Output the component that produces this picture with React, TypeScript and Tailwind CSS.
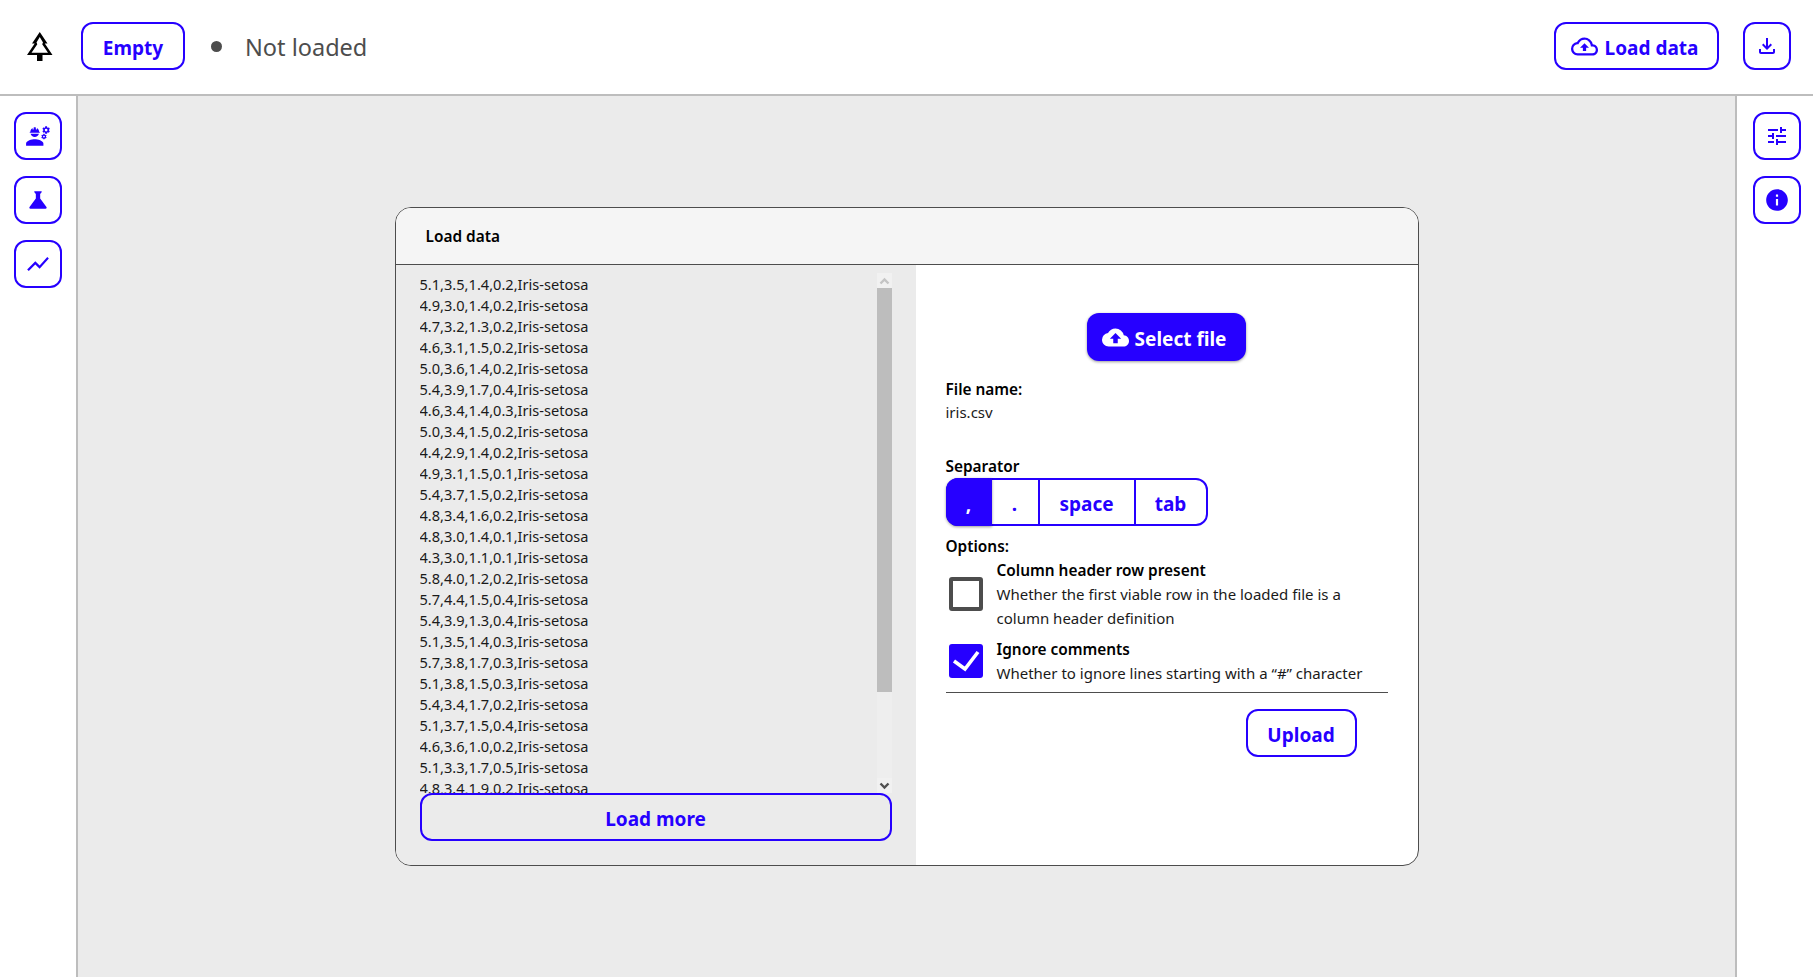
import React from 'react';
import { MdEngineering, MdScience, MdShowChart, MdOutlineCloudUpload, MdCloudUpload, MdOutlineFileDownload, MdTune, MdInfo } from 'react-icons/md';

const rows = [
  '5.1,3.5,1.4,0.2', '4.9,3.0,1.4,0.2', '4.7,3.2,1.3,0.2', '4.6,3.1,1.5,0.2', '5.0,3.6,1.4,0.2',
  '5.4,3.9,1.7,0.4', '4.6,3.4,1.4,0.3', '5.0,3.4,1.5,0.2', '4.4,2.9,1.4,0.2', '4.9,3.1,1.5,0.1',
  '5.4,3.7,1.5,0.2', '4.8,3.4,1.6,0.2', '4.8,3.0,1.4,0.1', '4.3,3.0,1.1,0.1', '5.8,4.0,1.2,0.2',
  '5.7,4.4,1.5,0.4', '5.4,3.9,1.3,0.4', '5.1,3.5,1.4,0.3', '5.7,3.8,1.7,0.3', '5.1,3.8,1.5,0.3',
  '5.4,3.4,1.7,0.2', '5.1,3.7,1.5,0.4', '4.6,3.6,1.0,0.2', '5.1,3.3,1.7,0.5',
];

const IconButton = ({ children }: { children: React.ReactNode }) => (
  <button className="flex h-12 w-12 items-center justify-center rounded-xl border-2 border-[#2600ff] text-[#2600ff]">
    {children}
  </button>
);

const OutlineButton = ({ className, children }: { className: string; children: React.ReactNode }) => (
  <button className={`flex h-12 items-center justify-center rounded-xl border-2 border-[#2600ff] pt-1 text-[19px] font-bold text-[#2600ff] ${className}`}>
    {children}
  </button>
);

const TreeLogo = () => (
  <svg width="26" height="29" viewBox="0 0 26 29" className="shrink-0">
    <rect x="10" y="22" width="5.5" height="7" fill="#000" />
    <path d="M12.75 0 L20.5 11.5 H17.8 L25.5 23 H0 L7.7 11.5 H5 Z" fill="#000" />
    <path d="M12.75 5 L16 10.6 L15.2 12.3 L21 20.7 H4.5 L10.3 12.3 L9.5 10.6 Z" fill="#fff" />
  </svg>
);

export default function App() {
  return (
    <div className="flex h-screen flex-col overflow-hidden bg-white font-['Noto_Sans',sans-serif] text-black">
      <header className="flex h-24 shrink-0 items-center border-b-2 border-[#bdbdbd] pb-0.5 pl-[27px] pr-[22px]">
        <TreeLogo />
        <OutlineButton className="ml-[28px] w-[104px]">Empty</OutlineButton>
        <div className="ml-[26px] h-[11px] w-[11px] rounded-full bg-[#4d4d4d]" />
        <span className="ml-[23px] pt-1 text-[23.5px] text-[#4d4d4d]">Not loaded</span>
        <div className="ml-auto flex items-center gap-6">
          <OutlineButton className="w-[165px] gap-[7px]">
            <MdOutlineCloudUpload className="-mt-1 -ml-1 text-[27px]" />
            Load data
          </OutlineButton>
          <IconButton><MdOutlineFileDownload className="text-[24px]" /></IconButton>
        </div>
      </header>

      <div className="flex min-h-0 flex-1">
        <aside className="flex w-[78px] shrink-0 flex-col gap-4 border-r-2 border-[#bdbdbd] pl-3.5 pt-4">
          <IconButton><MdEngineering className="text-[26px]" /></IconButton>
          <IconButton><MdScience className="text-[26px]" /></IconButton>
          <IconButton><MdShowChart className="text-[26px]" /></IconButton>
        </aside>

        <main className="flex flex-1 items-center justify-center bg-[#ebebeb]">
          <div className="flex h-[659px] w-[1024px] flex-col overflow-hidden rounded-2xl border border-[#4d4d4d] bg-white">
            <div className="flex h-[57px] shrink-0 items-center border-b border-[#4d4d4d] bg-[#f5f5f5] pl-[30px] pt-0.5 text-[15.4px] font-semibold">
              Load data
            </div>
            <div className="flex min-h-0 flex-1">
              <div className="flex w-[520px] shrink-0 flex-col bg-[#ebebeb] px-6 pb-6 pt-2">
                <div className="flex min-h-0 flex-1">
                  <div className="min-w-0 flex-1 overflow-hidden pt-px text-[14.6px] leading-[21px] text-[#1a1a1a]">
                    {rows.map((r, i) => (
                      <div key={i}>{r},Iris-setosa</div>
                    ))}
                    <div className="h-[19px] overflow-visible">4.8,3.4,1.9,0.2,Iris-setosa</div>
                  </div>
                  <div className="flex w-[15px] shrink-0 flex-col bg-[#f1f1f1]">
                    <div className="flex h-[15px] items-center justify-center">
                      <svg width="11" height="8" viewBox="0 0 11 8"><path d="M1.5 6.5 L5.5 2.5 L9.5 6.5" fill="none" stroke="#c4c4c4" strokeWidth="2.4" /></svg>
                    </div>
                    <div className="h-[404px] bg-[#bdbdbd]" />
                    <div className="flex-1 bg-[#eeeeee]" />
                    <div className="flex h-[15px] items-center justify-center">
                      <svg width="11" height="8" viewBox="0 0 11 8"><path d="M1.5 1.5 L5.5 5.5 L9.5 1.5" fill="none" stroke="#505050" strokeWidth="2.4" /></svg>
                    </div>
                  </div>
                </div>
                <OutlineButton className="w-full shrink-0">Load more</OutlineButton>
              </div>

              <div className="flex min-w-0 flex-1 flex-col pl-[30px] pr-[30px] pt-[48px]">
                <button className="ml-[141px] flex h-12 w-[159px] items-center justify-center gap-[6px] rounded-xl bg-[#2600ff] pt-1 text-[19px] font-bold text-white shadow-[0_1px_3px_rgba(0,0,0,0.4)]">
                  <MdCloudUpload className="-mt-1 -ml-1 text-[27px]" />
                  Select file
                </button>
                <div className="mt-[17px] text-[15.4px] font-semibold leading-[24px]">File name:</div>
                <div className="-mt-px text-[15px] leading-[22px] text-[#1a1a1a]">iris.csv</div>
                <div className="mt-[32px] text-[15.4px] font-semibold leading-[23px]">Separator</div>
                <div className="flex h-12 w-[262px] rounded-xl border-2 border-[#2600ff] text-[19px] font-bold text-[#2600ff]">
                  <div className="-my-0.5 -ml-0.5 flex w-[46px] items-center justify-center rounded-l-xl bg-[#2600ff] pt-1 text-white shadow-[0_1px_3px_rgba(0,0,0,0.4)]">,</div>
                  <div className="flex w-[48px] items-center justify-center border-r-2 border-[#2600ff] pt-1">.</div>
                  <div className="flex w-[96px] items-center justify-center border-r-2 border-[#2600ff] pt-1">space</div>
                  <div className="flex flex-1 items-center justify-center pt-1">tab</div>
                </div>
                <div className="mt-[9px] text-[15.4px] font-semibold leading-[23px]">Options:</div>
                <div className="flex gap-[14px] pl-[3px]">
                  <div className="mt-[19px] h-[34px] w-[34px] shrink-0 rounded-[3px] border-4 border-[#4d4d4d]" />
                  <div className="text-[15px] leading-[24px] text-[#1a1a1a]">
                    <div className="translate-y-px text-[15.4px] font-semibold text-black">Column header row present</div>
                    <div>Whether the first viable row in the loaded file is a column header definition</div>
                  </div>
                </div>
                <div className="mt-[7px] flex gap-[14px] pl-[3px]">
                  <div className="mt-[7px] h-[34px] w-[34px] shrink-0 rounded-[3px] bg-[#2600ff]">
                    <svg width="34" height="34" viewBox="0 0 34 34"><path d="M5 17 L16 25 L29 8" fill="none" stroke="#fff" strokeWidth="3.6" /></svg>
                  </div>
                  <div className="text-[15px] leading-[24px] text-[#1a1a1a]">
                    <div className="translate-y-px text-[15.4px] font-semibold text-black">Ignore comments</div>
                    <div>Whether to ignore lines starting with a “#” character</div>
                  </div>
                </div>
                <div className="mt-[7px] h-px w-[442px] bg-[#4d4d4d]" />
                <OutlineButton className="ml-[300px] mt-4 w-[111px]">Upload</OutlineButton>
              </div>
            </div>
          </div>
        </main>

        <aside className="flex w-[78px] shrink-0 flex-col gap-4 border-l-2 border-[#bdbdbd] pl-4 pt-4">
          <IconButton><MdTune className="text-[24px]" /></IconButton>
          <IconButton><MdInfo className="text-[26px]" /></IconButton>
        </aside>
      </div>
    </div>
  );
}
